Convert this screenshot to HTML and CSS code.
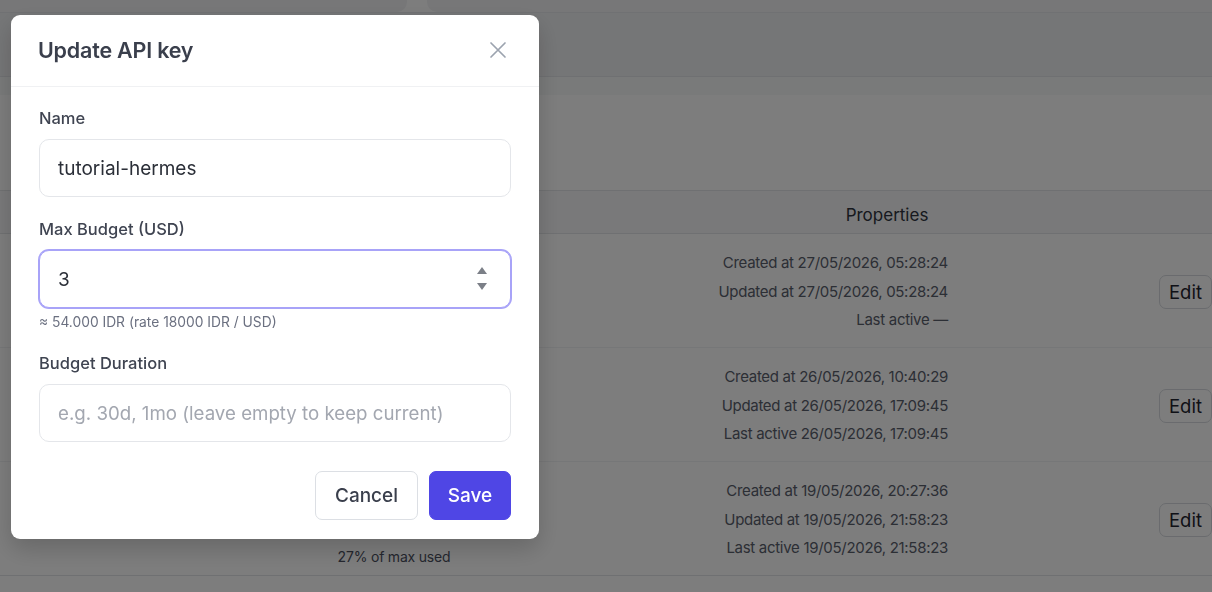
FILE: index.html
```html
<!DOCTYPE html>
<html lang="en">
<head>
<meta charset="utf-8">
<title>API keys</title>
<link rel="stylesheet" href="styles.css">
</head>
<body>
<div class="page">
  <div class="topbar">
    <div class="tab tab-left"></div>
    <div class="tab tab-right"></div>
  </div>
  <div class="card-head"></div>
  <div class="card-sub"></div>
  <div class="card-space"></div>

  <div class="table">
    <div class="thead">
      <div class="th"></div>
      <div class="th"></div>
      <div class="th"></div>
      <div class="th th-props">Properties</div>
      <div class="th"></div>
    </div>

    <div class="tr">
      <div class="td"></div>
      <div class="td td-budget"><span class="used">0% of max used</span></div>
      <div class="td"></div>
      <div class="td td-props">
        <span>Created at 27/05/2026, 05:28:24</span>
        <span>Updated at 27/05/2026, 05:28:24</span>
        <span>Last active —</span>
      </div>
      <div class="td td-action"><button class="edit">Edit</button></div>
    </div>

    <div class="tr">
      <div class="td"></div>
      <div class="td td-budget"><span class="used">12% of max used</span></div>
      <div class="td"></div>
      <div class="td td-props">
        <span>Created at 26/05/2026, 10:40:29</span>
        <span>Updated at 26/05/2026, 17:09:45</span>
        <span>Last active 26/05/2026, 17:09:45</span>
      </div>
      <div class="td td-action"><button class="edit">Edit</button></div>
    </div>

    <div class="tr tr-last">
      <div class="td"></div>
      <div class="td td-budget"><span class="used">27% of max used</span></div>
      <div class="td"></div>
      <div class="td td-props">
        <span>Created at 19/05/2026, 20:27:36</span>
        <span>Updated at 19/05/2026, 21:58:23</span>
        <span>Last active 19/05/2026, 21:58:23</span>
      </div>
      <div class="td td-action"><button class="edit">Edit</button></div>
    </div>
  </div>
</div>

<div class="overlay"></div>

<div class="modal" role="dialog" aria-labelledby="modal-title">
  <div class="modal-head">
    <h2 id="modal-title" class="modal-title">Update API key</h2>
    <button class="close" aria-label="Close">
      <svg width="18" height="18" viewBox="0 0 18 18" fill="none" stroke="#9ca3af" stroke-width="1.7" stroke-linecap="round">
        <path d="M2 2 L16 16 M16 2 L2 16"/>
      </svg>
    </button>
  </div>
  <div class="modal-body">
    <div class="field field-name">
      <label class="label" for="key-name">Name</label>
      <div class="input-box">
        <input id="key-name" class="input" type="text" value="tutorial-hermes">
      </div>
    </div>

    <div class="field field-budget">
      <label class="label" for="key-budget">Max Budget (USD)</label>
      <div class="input-box focused">
        <input id="key-budget" class="input" type="text" value="3">
        <span class="spinner">
          <svg width="10" height="24" viewBox="0 0 10 24" fill="#7b7f87">
            <path d="M5 0 L10 7 L0 7 Z"/>
            <path d="M0 16 L10 16 L5 23 Z"/>
          </svg>
        </span>
      </div>
      <div class="hint">≈ 54.000 IDR (rate 18000 IDR / USD)</div>
    </div>

    <div class="field field-duration">
      <label class="label" for="key-duration">Budget Duration</label>
      <div class="input-box">
        <input id="key-duration" class="input input-sm" type="text" placeholder="e.g. 30d, 1mo (leave empty to keep current)">
      </div>
    </div>

    <div class="actions">
      <button class="btn btn-cancel">Cancel</button>
      <button class="btn btn-save">Save</button>
    </div>
  </div>
</div>
</body>
</html>
```

FILE: styles.css
```css
* {
  box-sizing: border-box;
}

html, body {
  margin: 0;
  height: 100%;
}

body {
  font-family: "Inter", "Liberation Sans", sans-serif;
  color: #374151;
  background: #ffffff;
  overflow: hidden;
}

/* ---------- page behind the dialog ---------- */

.page {
  display: flex;
  flex-direction: column;
  height: 100%;
}

.topbar {
  display: flex;
  gap: 20px;
  height: 13px;
  border-bottom: 1px solid #e5e7eb;
}

.tab {
  background: #f2f3f5;
  border-radius: 0 0 10px 10px;
}

.tab-left {
  width: 407px;
  border-bottom-left-radius: 0;
}

.tab-right {
  flex: 1;
  border-bottom-right-radius: 0;
}

.card-head {
  height: 64px;
  background: #eff0f2;
  border-bottom: 1px solid #e2e4e8;
}

.card-sub {
  height: 18px;
  background: #f7f8f9;
}

.card-space {
  height: 95px;
}

.table {
  display: flex;
  flex-direction: column;
}

.thead,
.tr {
  display: grid;
  grid-template-columns: 300px 188px 278px 242px 1fr;
}

.thead {
  height: 44px;
  background: #f6f7f8;
  border-top: 1px solid #e3e5e8;
  border-bottom: 1px solid #e3e5e8;
  align-items: center;
}

.th {
  font-size: 17px;
  color: #2f3440;
  padding-top: 5px;
}

.th-props {
  text-align: center;
}

.tr {
  height: 114px;
  border-bottom: 1px solid #f1f2f4;
}

.tr-last {
  border-bottom: 1px solid #e3e5e8;
}

.td {
  display: flex;
}

.td-budget {
  flex-direction: column;
  justify-content: flex-end;
  align-items: center;
  padding-bottom: 10px;
}

.used {
  font-size: 14px;
  line-height: 16px;
  color: #4b5060;
  letter-spacing: -0.2px;
}

.td-props {
  flex-direction: column;
  justify-content: center;
  align-items: flex-end;
  padding-right: 60px;
  padding-top: 3px;
}

.td-props span {
  font-size: 15px;
  line-height: 28.5px;
  color: #5a606d;
  white-space: nowrap;
  letter-spacing: -0.3px;
}

.td-action {
  justify-content: flex-end;
  align-items: center;
}

.edit {
  height: 34px;
  width: 53px;
  margin-top: 2px;
  padding: 0;
  font-family: inherit;
  font-size: 18.5px;
  color: #1f2430;
  background: #ffffff;
  border: 1px solid #d8dbe0;
  border-radius: 7px;
}

/* ---------- dim layer ---------- */

.overlay {
  position: fixed;
  inset: 0;
  background: rgba(0, 0, 0, 0.51);
}

/* ---------- dialog ---------- */

.modal {
  position: fixed;
  left: 11px;
  top: 15px;
  width: 528px;
  background: #ffffff;
  border-radius: 9px;
  box-shadow: 0 10px 24px rgba(0, 0, 0, 0.18);
}

.modal-head {
  display: flex;
  align-items: center;
  justify-content: space-between;
  height: 72px;
  padding: 0 32px 1px 27px;
  border-bottom: 1px solid #f0f1f3;
}

.modal-title {
  margin: 0;
  font-size: 21.5px;
  font-weight: 600;
  color: #3a3f4c;
  letter-spacing: -0.2px;
}

.close {
  display: flex;
  padding: 0;
  border: 0;
  background: none;
}

.modal-body {
  padding: 21px 28px 19px;
}

.field {
  display: flex;
  flex-direction: column;
}

.field-name {
  margin-bottom: 22px;
}

.field-budget {
  margin-bottom: 23px;
}

.label {
  font-size: 16.5px;
  line-height: 20px;
  font-weight: 500;
  color: #3f4451;
  margin-bottom: 11px;
  padding-top: 1px;
  margin-top: -1px;
}

.input-box {
  display: flex;
  align-items: center;
  height: 58px;
  border: 1px solid #e4e6ea;
  border-radius: 10px;
  background: #ffffff;
}

.input-box.focused {
  border-color: #a8a3f8;
  box-shadow: 0 0 0 1px #a8a3f8;
}

.input {
  flex: 1;
  min-width: 0;
  height: 100%;
  padding: 0 18px;
  border: 0;
  outline: none;
  background: transparent;
  font-family: inherit;
  font-size: 19px;
  color: #2b2f38;
}

.input-sm {
  font-size: 18.7px;
}

.input::placeholder {
  color: #a3a7b0;
}

.spinner {
  display: flex;
  margin-right: 23px;
}

.hint {
  margin-top: 6px;
  font-size: 13.8px;
  line-height: 16px;
  color: #6b7080;
}

.actions {
  display: flex;
  justify-content: flex-end;
  gap: 11px;
  margin-top: 29px;
}

.btn {
  height: 49px;
  padding: 0;
  font-family: inherit;
  font-size: 19px;
  font-weight: 500;
  border-radius: 7px;
}

.btn-cancel {
  width: 103px;
  color: #3a3f4c;
  background: #ffffff;
  border: 1px solid #dcdfe4;
}

.btn-save {
  width: 82px;
  color: #ffffff;
  background: #4f46e5;
  border: 1px solid #4f46e5;
}
```
